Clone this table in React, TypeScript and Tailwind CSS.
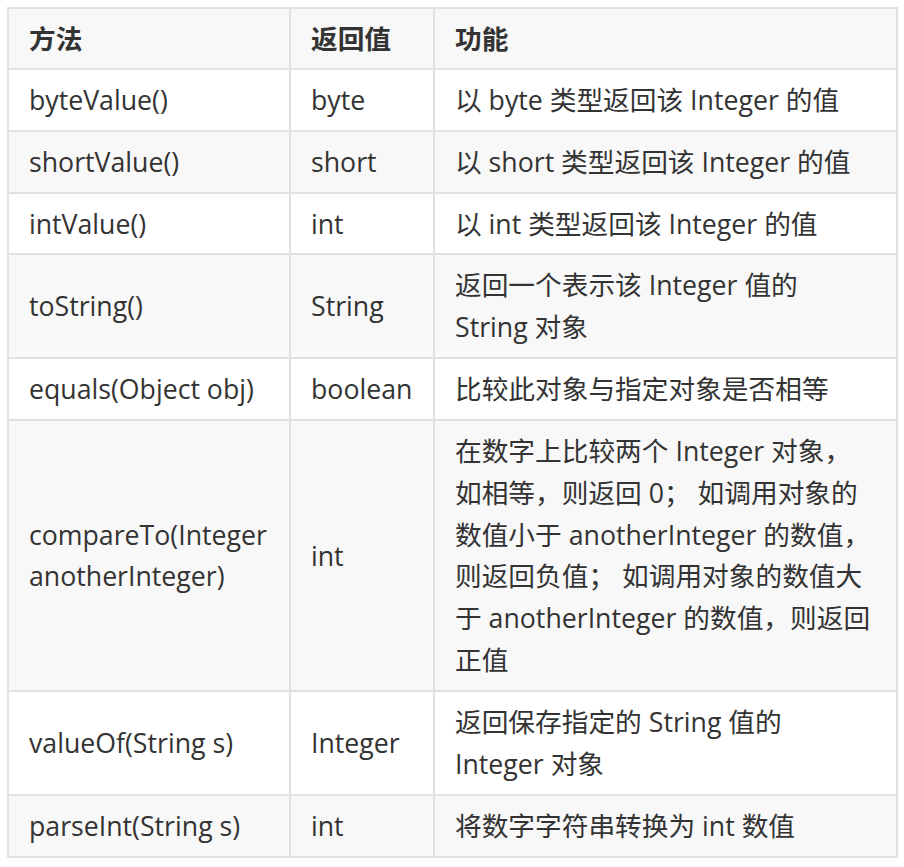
const rows: { method: string; ret: string; desc: string }[] = [
  { method: "byteValue()", ret: "byte", desc: "以 byte 类型返回该 Integer 的值" },
  { method: "shortValue()", ret: "short", desc: "以 short 类型返回该 Integer 的值" },
  { method: "intValue()", ret: "int", desc: "以 int 类型返回该 Integer 的值" },
  { method: "toString()", ret: "String", desc: "返回一个表示该 Integer 值的 String 对象" },
  { method: "equals(Object obj)", ret: "boolean", desc: "比较此对象与指定对象是否相等" },
  {
    method: "compareTo(Integer anotherInteger)",
    ret: "int",
    desc: "在数字上比较两个 Integer 对象，如相等，则返回 0； 如调用对象的数值小于 anotherInteger 的数值，则返回负值； 如调用对象的数值大于 anotherInteger 的数值，则返回正值",
  },
  { method: "valueOf(String s)", ret: "Integer", desc: "返回保存指定的 String 值的 Integer 对象" },
  { method: "parseInt(String s)", ret: "int", desc: "将数字字符串转换为 int 数值" },
];

export default function App() {
  return (
    <div className="min-h-screen bg-white pl-[7px] pt-[7px] font-['Open_Sans','Noto_Sans_CJK_SC',sans-serif] text-[26.7px] leading-[41.85px] text-[#333333]">
      <table className="w-[889px] table-fixed border-collapse">
        <colgroup>
          <col className="w-[282px]" />
          <col className="w-[144px]" />
          <col className="w-[463px]" />
        </colgroup>
        <thead>
          <tr className="bg-[#f8f8f8]">
            <th className="border-2 border-[#dfe2e5] px-[20px] py-[8.5px] text-left font-bold">方法</th>
            <th className="border-2 border-[#dfe2e5] px-[20px] py-[8.5px] text-left font-bold">返回值</th>
            <th className="border-2 border-[#dfe2e5] px-[20px] py-[8.5px] text-left font-bold">功能</th>
          </tr>
        </thead>
        <tbody>
          {rows.map((r, i) => (
            <tr key={r.method} className={i % 2 === 1 ? "bg-[#f8f8f8]" : "bg-white"}>
              <td className="border-2 border-[#dfe2e5] px-[20px] py-[9px] align-middle">{r.method}</td>
              <td className="border-2 border-[#dfe2e5] px-[20px] py-[9px] align-middle">{r.ret}</td>
              <td className="border-2 border-[#dfe2e5] px-[20px] py-[9px] align-middle">{r.desc}</td>
            </tr>
          ))}
        </tbody>
      </table>
    </div>
  );
}
